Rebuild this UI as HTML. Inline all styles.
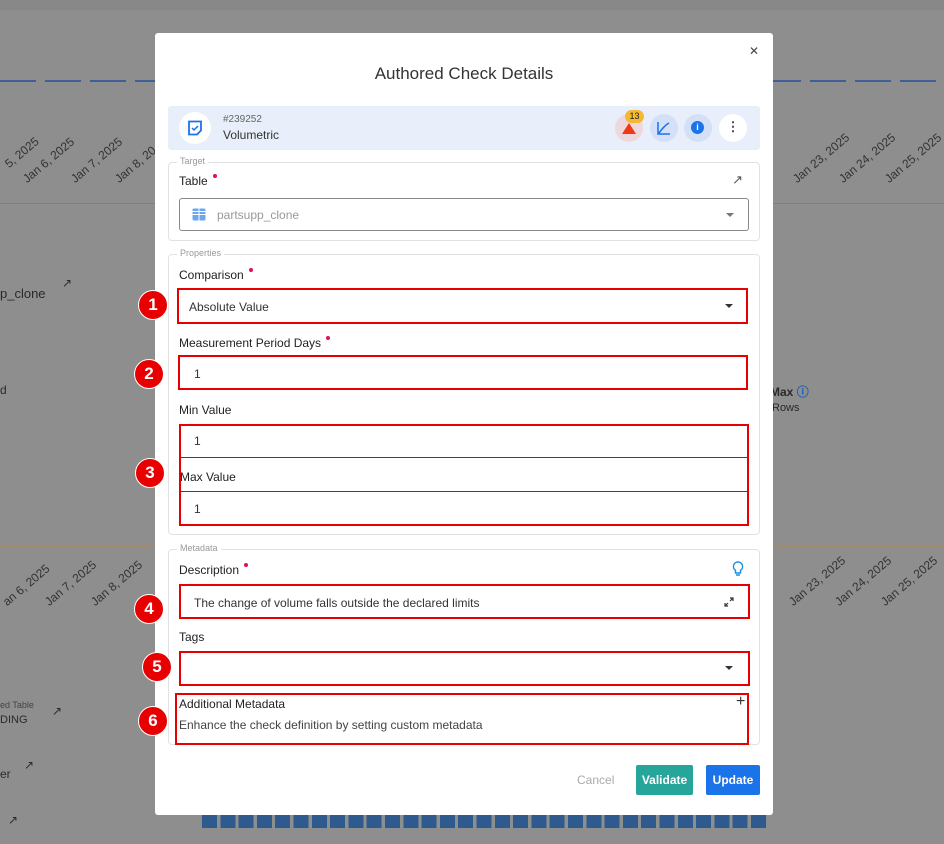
<!DOCTYPE html>
<html><head><style>
*{box-sizing:border-box;margin:0;padding:0}
body{width:944px;height:844px;background:#8e8e8e;font-family:"Liberation Sans",sans-serif;position:relative;overflow:hidden;color:#222}
.a{position:absolute}
.bg{color:#2a2a2a;font-size:12px}
.rot{position:absolute;font-size:12px;color:#333;transform:rotate(-40deg);transform-origin:left top;white-space:nowrap}
.modal{left:155px;top:33px;width:618px;height:782px;background:#fff;border-radius:3px}
.lbl{font-size:12px;color:#222}
.dot{display:inline-block;width:4px;height:4px;border-radius:50%;background:#e0105a;vertical-align:top;margin-left:5px;margin-top:0px}
.sec{border:1px solid #e2e2e2;border-radius:4px;position:absolute}
.leg{position:absolute;top:-7px;left:8px;background:#fff;padding:0 3px;font-size:9px;color:#999}
.red{position:absolute;border:2px solid #e80000}
.num{position:absolute;width:30px;height:30px;border-radius:50%;background:#e80000;color:#fff;font-weight:bold;font-size:17px;text-align:center;line-height:28px;border:1px solid #fff}
.caret{position:absolute;width:0;height:0;border-left:4px solid transparent;border-right:4px solid transparent;border-top:4px solid #333}
.v{font-size:12px;color:#333;position:absolute}
</style></head><body>
<!-- background hints -->
<div class="a" style="left:0;top:0;width:944px;height:10px;background:#888"></div>
<div class="a" style="left:0;top:203px;width:155px;height:1px;background:#7f7f7f"></div>
<div class="a" style="left:773px;top:203px;width:171px;height:1px;background:#7f7f7f"></div>
<div class="rot" style="left:2px;top:160px">5, 2025</div>
<div class="rot" style="left:20px;top:175px">Jan 6, 2025</div>
<div class="rot" style="left:68px;top:175px">Jan 7, 2025</div>
<div class="rot" style="left:112px;top:175px">Jan 8, 20</div>
<div class="rot" style="left:790px;top:175px">Jan 23, 2025</div>
<div class="rot" style="left:836px;top:175px">Jan 24, 2025</div>
<div class="rot" style="left:882px;top:175px">Jan 25, 2025</div>
<div class="rot" style="left:0px;top:598px">an 6, 2025</div>
<div class="rot" style="left:42px;top:598px">Jan 7, 2025</div>
<div class="rot" style="left:88px;top:598px">Jan 8, 2025</div>
<div class="rot" style="left:786px;top:598px">Jan 23, 2025</div>
<div class="rot" style="left:832px;top:598px">Jan 24, 2025</div>
<div class="rot" style="left:878px;top:598px">Jan 25, 2025</div>
<div class="a bg" style="left:0;top:286px;font-size:13px">p_clone</div>
<div class="a bg" style="left:62px;top:276px">↗</div>
<div class="a bg" style="left:0;top:383px">d</div>
<div class="a bg" style="left:770px;top:383px;font-weight:bold">Max <span style="color:#1a5fb4">ⓘ</span></div>
<div class="a bg" style="left:772px;top:402px;font-size:11px">Rows</div>
<div class="a" style="left:0;top:545px;width:155px;height:2px;background:#a08a6a"></div>
<div class="a" style="left:773px;top:545px;width:171px;height:2px;background:#a08a6a"></div>
<div class="a bg" style="left:0;top:700px;font-size:9px;color:#444">ed Table</div>
<div class="a bg" style="left:0;top:714px;font-size:11px">DING</div>
<div class="a bg" style="left:52px;top:704px">↗</div>
<div class="a bg" style="left:0;top:767px">er</div>
<div class="a bg" style="left:24px;top:758px">↗</div>
<div class="a bg" style="left:8px;top:813px">↗</div>
<div class="a" style="left:202px;top:814px;width:566px;height:14px;background:repeating-linear-gradient(90deg,#2f5a8e 0 15px,transparent 15px 18.3px)"></div>
<div class="a" style="left:0;top:80px;width:944px;height:2px;background:repeating-linear-gradient(90deg,#3f5f96 0 36px,transparent 36px 45px)"></div>

<div class="a modal">
  <div class="a" style="right:14px;top:11px;font-size:12px;color:#444">✕</div>
  <div class="a" style="left:0;width:618px;top:31px;text-align:center;font-size:17px;color:#333">Authored Check Details</div>
  <div class="a" style="left:13px;top:73px;width:592px;height:44px;background:#e8eefa;border-radius:3px">
    <div class="a" style="left:11px;top:6px;width:32px;height:32px;border-radius:50%;background:#fff">
      <svg class="a" style="left:8px;top:8px" width="16" height="16" viewBox="0 0 16 16"><path d="M2 1.5h12v9l-4 4H2z" fill="none" stroke="#1a73e8" stroke-width="1.8"/><path d="M5 8l2 2 4-4" fill="none" stroke="#1a73e8" stroke-width="1.5"/></svg>
    </div>
    <div class="a" style="left:55px;top:8px;font-size:10px;color:#666">#239252</div>
    <div class="a" style="left:55px;top:22px;font-size:12px;color:#333">Volumetric</div>
    <div class="a" style="left:447px;top:8px;width:28px;height:28px;border-radius:50%;background:#edd8dd"><div class="a" style="left:7px;top:9px;width:0;height:0;border-left:7px solid transparent;border-right:7px solid transparent;border-bottom:11px solid #f03a17"></div></div>
    <div class="a" style="left:457px;top:4px;width:19px;height:13px;border-radius:7px;background:#f5b82e;font-size:9px;text-align:center;line-height:13px">13</div>
    <div class="a" style="left:482px;top:8px;width:28px;height:28px;border-radius:50%;background:#d3e0f7"><svg class="a" style="left:7px;top:7px" width="14" height="14"><path d="M1 1v12h12M2 12C5 8 8 4 12 2" fill="none" stroke="#1a73e8" stroke-width="1.5"/></svg></div>
    <div class="a" style="left:516px;top:8px;width:28px;height:28px;border-radius:50%;background:#d3e0f7"><div class="a" style="left:7px;top:7px;width:13px;height:13px;border-radius:50%;background:#1a73e8;color:#fff;font-size:9px;font-weight:bold;text-align:center;line-height:13px">i</div></div>
    <div class="a" style="left:551px;top:8px;width:28px;height:28px;border-radius:50%;background:#fff;text-align:center;font-size:13px;line-height:26px;color:#444;font-weight:bold">⋮</div>
  </div>

  <div class="sec" style="left:13px;top:129px;width:592px;height:79px"><div class="leg">Target</div>
    <div class="a lbl" style="left:10px;top:11px">Table<span class="dot"></span></div>
    <div class="a" style="right:16px;top:9px;font-size:13px;color:#555">↗</div>
    <div class="a" style="left:10px;top:35px;width:570px;height:33px;border:1px solid #888;border-radius:3px">
      <svg class="a" style="left:12px;top:9px" width="14" height="13"><rect x="0.5" y="0.5" width="13" height="12" rx="1.5" fill="#6aa7f0"/><path d="M0 6.5h14M7 0v13M0 3.5h14" stroke="#fff" stroke-width="1"/></svg>
      <div class="a" style="left:37px;top:9px;font-size:12px;color:#999">partsupp_clone</div>
      <div class="caret" style="right:14px;top:14px;border-top-color:#777"></div>
    </div>
  </div>

  <div class="sec" style="left:13px;top:221px;width:592px;height:281px"><div class="leg">Properties</div>
    <div class="a lbl" style="left:10px;top:13px">Comparison<span class="dot"></span></div>
    <div class="a lbl" style="left:10px;top:81px">Measurement Period Days<span class="dot"></span></div>
    <div class="a lbl" style="left:10px;top:148px">Min Value</div>
  </div>

  <div class="sec" style="left:13px;top:516px;width:592px;height:196px"><div class="leg">Metadata</div>
    <div class="a lbl" style="left:10px;top:13px">Description<span class="dot"></span></div>
    <svg class="a" style="left:563px;top:11px" width="12" height="16" viewBox="0 0 12 16"><path d="M6 1a4.5 4.5 0 0 0-2.5 8.3V12h5V9.3A4.5 4.5 0 0 0 6 1zM4 14h4" fill="none" stroke="#1a8fe0" stroke-width="1.4"/></svg>
    <div class="a lbl" style="left:10px;top:80px">Tags</div>
  </div>

  <!-- red boxes -->
  <div class="red" style="left:22px;top:255px;width:571px;height:36px"></div>
  <div class="v" style="left:34px;top:267px">Absolute Value</div><div class="caret" style="left:570px;top:271px"></div>
  <div class="red" style="left:23px;top:322px;width:570px;height:35px"></div>
  <div class="v" style="left:39px;top:334px">1</div>
  <div class="red" style="left:24px;top:391px;width:570px;height:102px"></div>
  <div class="a" style="left:26px;top:424px;width:566px;height:1px;background:#444"></div>
  <div class="a" style="left:26px;top:458px;width:566px;height:1px;background:#444"></div>
  <div class="v" style="left:39px;top:401px">1</div>
  <div class="a lbl" style="left:25px;top:437px">Max Value</div>
  <div class="v" style="left:39px;top:469px">1</div>
  <div class="red" style="left:24px;top:551px;width:571px;height:35px"></div>
  <div class="v" style="left:39px;top:563px">The change of volume falls outside the declared limits</div>
  <svg class="a" style="left:569px;top:564px" width="10" height="10"><path d="M1 9l3-3M1 6v3h3M9 1L6 4M6 1h3v3" fill="none" stroke="#333" stroke-width="1.2"/></svg>
  <div class="red" style="left:24px;top:618px;width:571px;height:35px"></div><div class="caret" style="left:570px;top:633px"></div>
  <div class="red" style="left:20px;top:660px;width:574px;height:52px"></div>
  <div class="a lbl" style="left:24px;top:664px">Additional Metadata</div>
  <div class="a" style="left:581px;top:660px;font-size:16px;color:#333">+</div>
  <div class="a lbl" style="left:24px;top:685px;color:#444">Enhance the check definition by setting custom metadata</div>

  <div class="a" style="left:422px;top:740px;font-size:12px;color:#aaa">Cancel</div>
  <div class="a" style="left:481px;top:732px;width:57px;height:30px;background:#26a69a;color:#fff;font-size:12px;font-weight:bold;text-align:center;line-height:30px;border-radius:2px">Validate</div>
  <div class="a" style="left:551px;top:732px;width:54px;height:30px;background:#1a73e8;color:#fff;font-size:12px;font-weight:bold;text-align:center;line-height:30px;border-radius:2px">Update</div>
</div>
<div class="num" style="left:138px;top:290px">1</div>
<div class="num" style="left:134px;top:359px">2</div>
<div class="num" style="left:135px;top:458px">3</div>
<div class="num" style="left:134px;top:594px">4</div>
<div class="num" style="left:142px;top:652px">5</div>
<div class="num" style="left:138px;top:706px">6</div>
</body></html>
